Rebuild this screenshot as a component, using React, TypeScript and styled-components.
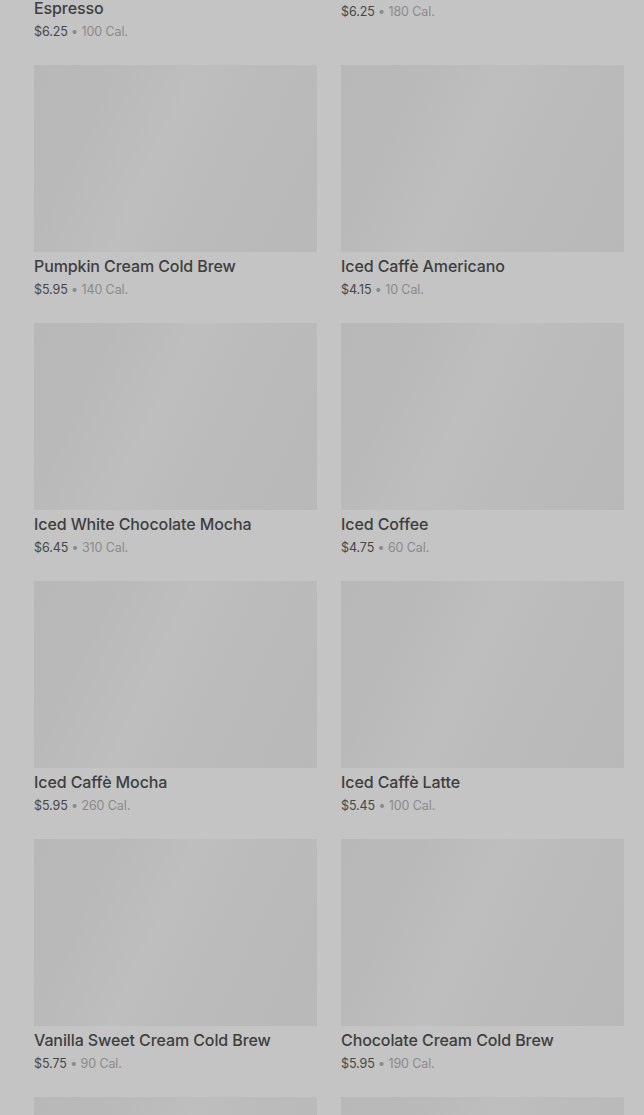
import styled, { createGlobalStyle } from 'styled-components';

const GlobalStyle = createGlobalStyle`
    html, body {
        margin: 0;
        padding: 0;
        background: #c4c4c4;
        overflow: hidden;
    }
    body {
        font-family: Inter, Roboto, "Liberation Sans", sans-serif;
    }
`;

const Pagina = styled.main`
    height: 1115px;
    overflow: hidden;
    padding: 0 20px 0 34px;
`;

// a lista esta rolada: a primeira linha fica parcialmente acima da tela
const Grade = styled.ul`
    list-style: none;
    margin: -213px 0 0;
    padding: 0;
    display: grid;
    grid-template-columns: 283px 283px;
    column-gap: 24px;
    row-gap: 23px;
    align-items: start;
`;

const Card = styled.li`
    display: flex;
    flex-direction: column;
`;

const Imagem = styled.div`
    height: 187px;
    background: linear-gradient(
        115deg,
        #b8b8b8 0%,
        #b9b9b9 22%,
        #bebebe 45%,
        #bbbbbb 62%,
        #b8b8b8 100%
    );
`;

const Titulo = styled.h3`
    margin: 4px 0 0;
    font-size: 16px;
    line-height: 20px;
    font-weight: 500;
    letter-spacing: -0.1px;
    color: #3e3e3e;
`;

const Info = styled.p`
    margin: 4px 0 0;
    font-size: 12.5px;
    line-height: 20px;
    letter-spacing: -0.1px;
    color: #474747;
`;

const Calorias = styled.span`
    color: #8a8a8a;
`;

const bebidas = [
    { nome: 'Iced Brown Sugar Oatmilk Shaken Espresso', preco: '$6.25', cal: '100 Cal.' },
    { nome: 'Iced Chocolate Almondmilk Shaken', preco: '$6.25', cal: '180 Cal.' },
    { nome: 'Pumpkin Cream Cold Brew', preco: '$5.95', cal: '140 Cal.' },
    { nome: 'Iced Caffè Americano', preco: '$4.15', cal: '10 Cal.' },
    { nome: 'Iced White Chocolate Mocha', preco: '$6.45', cal: '310 Cal.' },
    { nome: 'Iced Coffee', preco: '$4.75', cal: '60 Cal.' },
    { nome: 'Iced Caffè Mocha', preco: '$5.95', cal: '260 Cal.' },
    { nome: 'Iced Caffè Latte', preco: '$5.45', cal: '100 Cal.' },
    { nome: 'Vanilla Sweet Cream Cold Brew', preco: '$5.75', cal: '90 Cal.' },
    { nome: 'Chocolate Cream Cold Brew', preco: '$5.95', cal: '190 Cal.' },
    { nome: 'Iced Matcha Tea Latte', preco: '$5.45', cal: '200 Cal.' },
    { nome: 'Iced Chai Tea Latte', preco: '$5.45', cal: '240 Cal.' },
];

const App = () => {
    return (
        <>
            <GlobalStyle />
            <Pagina>
                <Grade>
                    {bebidas.map((b) => (
                        <Card key={b.nome}>
                            <Imagem />
                            <Titulo>{b.nome}</Titulo>
                            <Info>
                                {b.preco} <Calorias>• {b.cal}</Calorias>
                            </Info>
                        </Card>
                    ))}
                </Grade>
            </Pagina>
        </>
    );
};

export default App;
